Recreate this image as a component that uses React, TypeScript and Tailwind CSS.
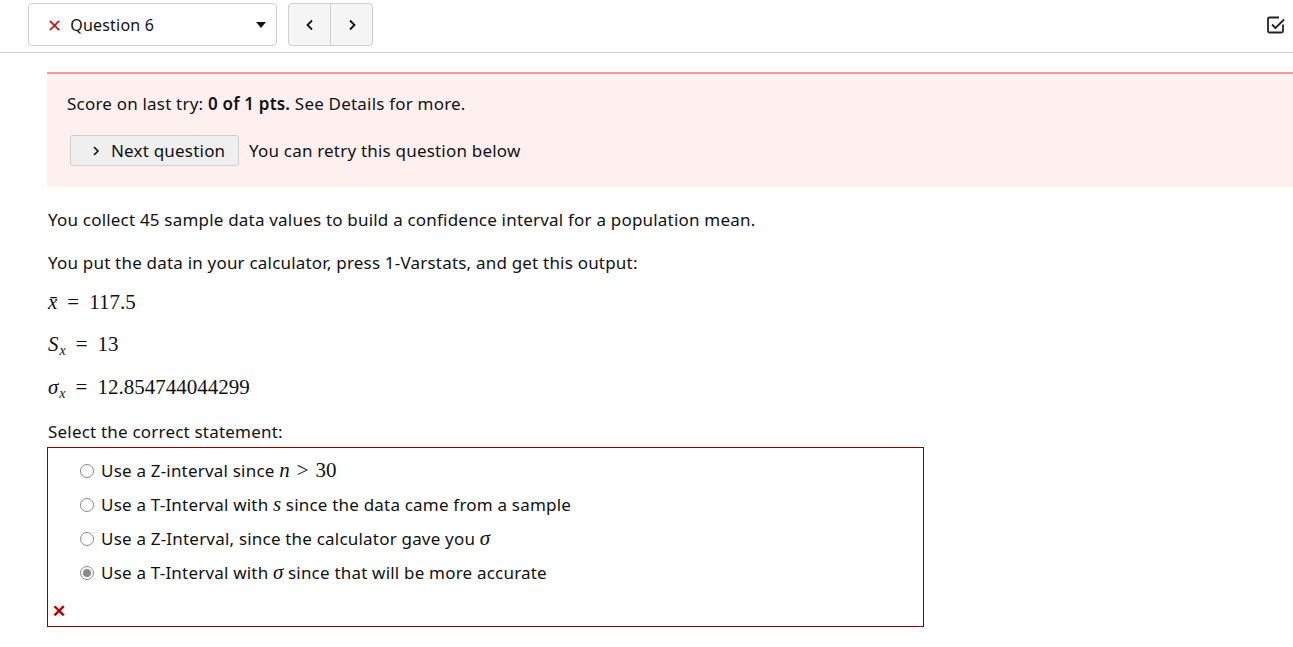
import React from "react";

const sans = { fontFamily: '"Noto Sans", "Open Sans", sans-serif' };
const serif = { fontFamily: '"Liberation Serif", "DejaVu Serif", serif' };

function M({ children, italic = false }: { children: React.ReactNode; italic?: boolean }) {
  return (
    <span className={`text-[21px] leading-none tracking-normal ${italic ? "italic" : ""}`} style={serif}>
      {children}
    </span>
  );
}

function Eq() {
  return <span className="text-[21px] leading-none mx-[10px] tracking-normal" style={serif}>=</span>;
}

function Sub({ children }: { children: React.ReactNode }) {
  return <span className="italic text-[14px] leading-none relative top-[4px] ml-[1px] tracking-normal" style={serif}>{children}</span>;
}

function Radio({ checked = false }: { checked?: boolean }) {
  return (
    <span className="inline-flex w-[14px] h-[14px] rounded-full border border-[#8a8a8a] bg-white items-center justify-center shrink-0">
      {checked && <span className="w-[8px] h-[8px] rounded-full bg-[#8a8a8a]" />}
    </span>
  );
}

function Option({ checked, children }: { checked?: boolean; children: React.ReactNode }) {
  return (
    <div className="flex items-center gap-[7px] h-[34px]">
      <Radio checked={checked} />
      <span>{children}</span>
    </div>
  );
}

export default function App() {
  return (
    <div className="w-[1293px] h-[647px] bg-white text-[17px] tracking-[0.2px] text-[#111] overflow-hidden" style={sans}>
      <div className="flex items-center justify-between pl-[28px] pr-[8px] pt-[3px] pb-[6px] border-b border-[#cfcfcf]">
        <div className="flex items-center gap-[11px]">
          <div className="w-[249px] h-[43px] border border-[#cfcfcf] rounded-[4px] flex items-center pl-[18px] pr-[9px] text-[16px]">
            <span className="text-[#b02020] text-[18px] leading-none mr-[8px]">✕</span>
            <span className="flex-1">Question 6</span>
            <svg width="12" height="8" viewBox="0 0 12 8"><path d="M1 1h10L6 7z" fill="#111" /></svg>
          </div>
          <div className="flex h-[43px] border border-[#cfcfcf] rounded-[4px] bg-[#f5f5f5] overflow-hidden">
            <div className="w-[42px] flex items-center justify-center border-r border-[#cfcfcf]">
              <svg width="10" height="12" viewBox="0 0 10 12"><path d="M7 1.5 2.5 6 7 10.5" stroke="#111" strokeWidth="1.8" fill="none" /></svg>
            </div>
            <div className="w-[41px] flex items-center justify-center">
              <svg width="10" height="12" viewBox="0 0 10 12"><path d="M3 1.5 7.5 6 3 10.5" stroke="#111" strokeWidth="1.8" fill="none" /></svg>
            </div>
          </div>
        </div>
        <svg width="18" height="18" viewBox="0 0 18 18">
          <path d="M16 8.5V15a1.5 1.5 0 0 1-1.5 1.5h-12A1.5 1.5 0 0 1 1 15V3a1.5 1.5 0 0 1 1.5-1.5h9.5" stroke="#222" strokeWidth="1.8" fill="none" strokeLinejoin="round" />
          <path d="M5 8.5l3.5 3.5L17 3.5" stroke="#222" strokeWidth="1.8" fill="none" strokeLinejoin="round" />
        </svg>
      </div>

      <div className="pl-[47px] pt-[19px]">
        <div className="bg-[#fff0f0] border-t-2 border-[#f89a9a] pl-[20px] pt-[18px] pb-[21px]">
          <p className="leading-[24px]">
            Score on last try: <b className="font-semibold">0 of 1 pts.</b> See Details for more.
          </p>
          <div className="flex items-center gap-[10px] mt-[19px] pl-[3px]">
            <button className="h-[31px] w-[169px] pl-[21px] bg-[#efefef] border border-[#cfcfcf] rounded-[3px] flex items-center gap-[11px] text-[17px] tracking-[0.2px]" style={sans}>
              <svg width="8" height="12" viewBox="0 0 8 12"><path d="M2 2l4 4-4 4" stroke="#111" strokeWidth="1.6" fill="none" /></svg>
              Next question
            </button>
            <span>You can retry this question below</span>
          </div>
        </div>

        <div className="pr-[20px]">
          <p className="mt-[21px] leading-[24px] pl-[1px]">You collect 45 sample data values to build a confidence interval for a population mean.</p>
          <p className="mt-[19px] leading-[24px] pl-[1px]">You put the data in your calculator, press 1-Varstats, and get this output:</p>
          <div className="mt-[14px] h-[28px] flex items-center pl-[1px]">
            <span><M italic>x̄</M><Eq /><M>117.5</M></span>
          </div>
          <div className="mt-[14px] h-[28px] flex items-center pl-[1px]">
            <span><M italic>S</M><Sub>x</Sub><Eq /><M>13</M></span>
          </div>
          <div className="mt-[15px] h-[28px] flex items-center pl-[1px]">
            <span><M italic>σ</M><Sub>x</Sub><Eq /><M>12.854744044299</M></span>
          </div>
          <p className="mt-[18px] leading-[24px] pl-[1px]">Select the correct statement:</p>
          <div className="mt-[3px] w-[877px] h-[180px] border border-[#8b0000] pt-[6px] flex flex-col">
            <div className="pl-[32px]">
              <Option>
                Use a Z-interval since <M italic>n</M><span className="mx-[7px]"><M>&gt;</M></span><M>30</M>
              </Option>
              <Option>
                Use a T-Interval with <M italic>s</M> since the data came from a sample
              </Option>
              <Option>
                Use a Z-Interval, since the calculator gave you <M italic>σ</M>
              </Option>
              <Option checked>
                Use a T-Interval with <M italic>σ</M> since that will be more accurate
              </Option>
            </div>
            <div className="pl-[4px] mt-[12px] text-[#b00000] font-bold text-[17px] leading-none">✕</div>
          </div>
        </div>
      </div>
    </div>
  );
}
